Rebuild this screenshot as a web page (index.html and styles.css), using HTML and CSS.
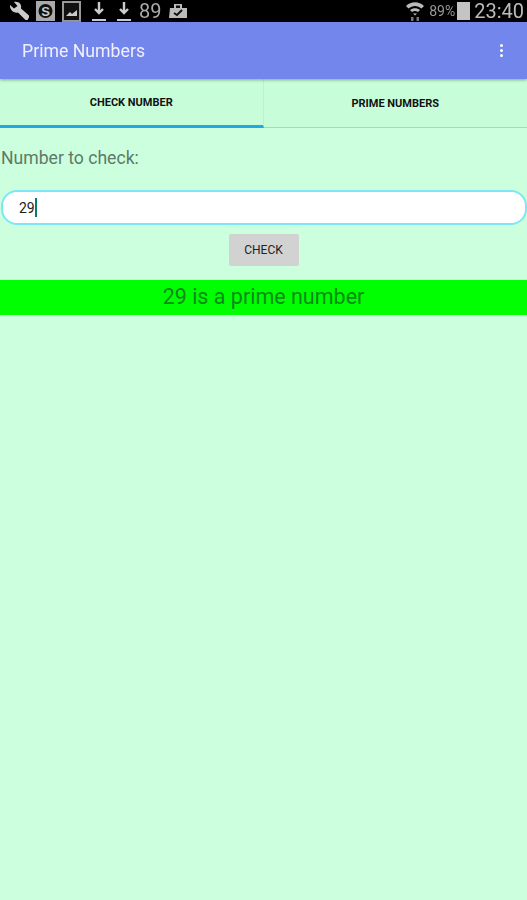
FILE: index.html
```html
<!DOCTYPE html>
<html lang="en">
<head>
    <meta charset="UTF-8">
    <meta name="viewport" content="width=device-width, initial-scale=1.0">
    <title>Prime Numbers</title>
    <link rel="stylesheet" href="styles.css">
</head>
<body>
    <div class="status-bar">
        <div class="status-left">
            <svg class="icon-wrench" width="22" height="22" viewBox="0 0 22 22">
                <path d="M2 5 L6 8.500 L9.500 6 L6 2 C10.500 1 14 4 13 8.500 L21 15.500 L21 17.500 L19.500 20 L17.500 20 L10 12.500 C6 13.500 1.500 10 2 5 Z" fill="#ccc"/>
            </svg>
            <svg class="icon-box" width="19" height="20" viewBox="0 0 19 20">
                <rect x="0" y="0" width="19" height="20" fill="#aaa"/>
                <circle cx="9.500" cy="10" r="7" fill="#111"/>
                <text x="9.500" y="14.500" class="icon-letter" text-anchor="middle">S</text>
            </svg>
            <svg class="icon-pic" width="19" height="21" viewBox="0 0 19 21">
                <rect x="1" y="1" width="17" height="19" fill="#111" stroke="#999" stroke-width="2"/>
                <path d="M4 15 L8 11 L10 13 L15 9 V15 Z" fill="#ccc"/>
            </svg>
            <svg class="icon-dl" width="14" height="20" viewBox="0 0 14 20">
                <path d="M7 1 V11 M3 8 L7 12 L11 8" fill="none" stroke="#ccc" stroke-width="2.400"/>
                <rect x="0" y="18" width="14" height="2" fill="#ccc"/>
            </svg>
            <svg class="icon-dl" width="14" height="20" viewBox="0 0 14 20">
                <path d="M7 1 V11 M3 8 L7 12 L11 8" fill="none" stroke="#ccc" stroke-width="2.400"/>
                <rect x="0" y="18" width="14" height="2" fill="#ccc"/>
            </svg>
            <span class="status-num">89</span>
            <svg class="icon-bag" width="20" height="18" viewBox="0 0 20 18">
                <path d="M2 6 H6 V2 H14 V6 H19 V16 H1 Z" fill="#bbb"/>
                <path d="M8 3.500 H12 V6 H8 Z" fill="#111"/>
                <path d="M6 11 L9 13 L14 8" fill="none" stroke="#111" stroke-width="2"/>
            </svg>
        </div>
        <div class="status-right">
            <svg class="icon-wifi" width="18" height="19" viewBox="0 0 18 19">
                <path d="M0 4 C5 -1 13 -1 18 4 L15.500 6.500 C11.500 3 6.500 3 2.500 6.500 Z" fill="#bbb"/>
                <path d="M4 8 C7 5.500 11 5.500 14 8 L12 10 C10 8.500 8 8.500 6 10 Z" fill="#bbb"/>
                <path d="M7 11.500 H11 L9 13.500 Z" fill="#bbb"/>
                <path d="M5 19 V15 H7.500 V19 Z M10.500 19 V15 H13 V19 Z" fill="#777"/>
            </svg>
            <span class="status-pct">89%</span>
            <span class="battery"></span>
            <span class="status-time">23:40</span>
        </div>
    </div>

    <header class="app-bar">
        <span class="app-title">Prime Numbers</span>
        <div class="overflow">
            <span class="dot"></span>
            <span class="dot"></span>
            <span class="dot"></span>
        </div>
    </header>

    <nav class="tabs">
        <div class="tab tab-active">CHECK NUMBER</div>
        <div class="tab">PRIME NUMBERS</div>
    </nav>

    <main class="content">
        <label class="prompt" for="number">Number to check:</label>
        <div class="input-box">
            <span id="number" class="input-value">29</span><span class="caret"></span>
        </div>
        <div class="btn-row">
            <button class="check-btn" type="button">CHECK</button>
        </div>
        <div class="result">29 is a prime number</div>
    </main>
</body>
</html>
```

FILE: styles.css
```css
html, body {
    margin: 0;
    padding: 0;
}
body {
    width: 527px;
    height: 900px;
    overflow: hidden;
    background-color: #ccffdd;
    font-family: Roboto, "Liberation Sans", sans-serif;
}
.status-bar {
    height: 22px;
    background-color: #000;
    display: flex;
    justify-content: space-between;
    align-items: center;
    color: #bbb;
    filter: blur(0.5px);
}
.status-left {
    display: flex;
    align-items: center;
    padding-left: 8px;
}
.icon-box {
    margin-left: 6px;
}
.icon-letter {
    font-family: "Liberation Sans", sans-serif;
    font-size: 13px;
    font-weight: bold;
    fill: #ccc;
}
.icon-pic {
    margin-left: 7px;
}
.icon-dl {
    margin-left: 11px;
}
.status-num {
    font-size: 20px;
    margin-left: 8px;
    color: #aaa;
}
.icon-bag {
    margin-left: 7px;
}
.status-right {
    display: flex;
    align-items: center;
    padding-right: 3px;
}
.status-pct {
    font-size: 14px;
    margin-left: 5px;
    color: #999;
}
.battery {
    width: 13px;
    height: 18px;
    margin-left: 2px;
    background-color: #c4c4c4;
}
.status-time {
    font-size: 20px;
    margin-left: 4px;
    color: #bbb;
}
.app-bar {
    height: 57px;
    background-color: #7386ec;
    box-shadow: 0 1px 3px rgba(0, 0, 0, 0.35);
    display: flex;
    justify-content: space-between;
    align-items: center;
    padding: 0 24px 0 22px;
    position: relative;
}
.app-title {
    color: #f0f0ff;
    font-size: 17.700px;
}
.overflow {
    display: flex;
    flex-direction: column;
    gap: 2px;
}
.dot {
    width: 3px;
    height: 3px;
    border-radius: 50%;
    background-color: #fff;
}
.tabs {
    display: flex;
    height: 49px;
    background-color: #c8fdda;
}
.tab {
    flex: 264;
    display: flex;
    align-items: center;
    justify-content: center;
    font-size: 11px;
    font-weight: bold;
    color: #111;
    box-sizing: border-box;
    border-bottom: 1px solid #8fdfe0;
}
.tab-active {
    flex: 263;
    border-bottom: 3px solid #1fa9e0;
    border-right: 1px solid #bfeed0;
}
.content {
    display: flex;
    flex-direction: column;
}
.prompt {
    font-size: 17.600px;
    color: #5d7a68;
    padding: 21px 0 0 1px;
    line-height: 19px;
}
.input-box {
    height: 31px;
    margin: 22px 0 0 1px;
    background-color: #fff;
    border: 2px solid #7fe6f5;
    border-radius: 16px;
    display: flex;
    align-items: center;
    padding-left: 16px;
    font-size: 14px;
    color: #222;
}
.caret {
    width: 2px;
    height: 19px;
    background-color: #0d7a70;
}
.btn-row {
    display: flex;
    justify-content: center;
    margin-top: 9px;
}
.check-btn {
    width: 70px;
    height: 32px;
    border: none;
    border-radius: 2px;
    background-color: #d2d2d2;
    color: #222;
    font-family: Roboto, "Liberation Sans", sans-serif;
    font-size: 12px;
    padding: 0;
}
.result {
    margin-top: 14px;
    height: 35px;
    line-height: 33px;
    background-color: #00ff00;
    color: #0a8a1a;
    font-size: 21.500px;
    text-align: center;
}
```
